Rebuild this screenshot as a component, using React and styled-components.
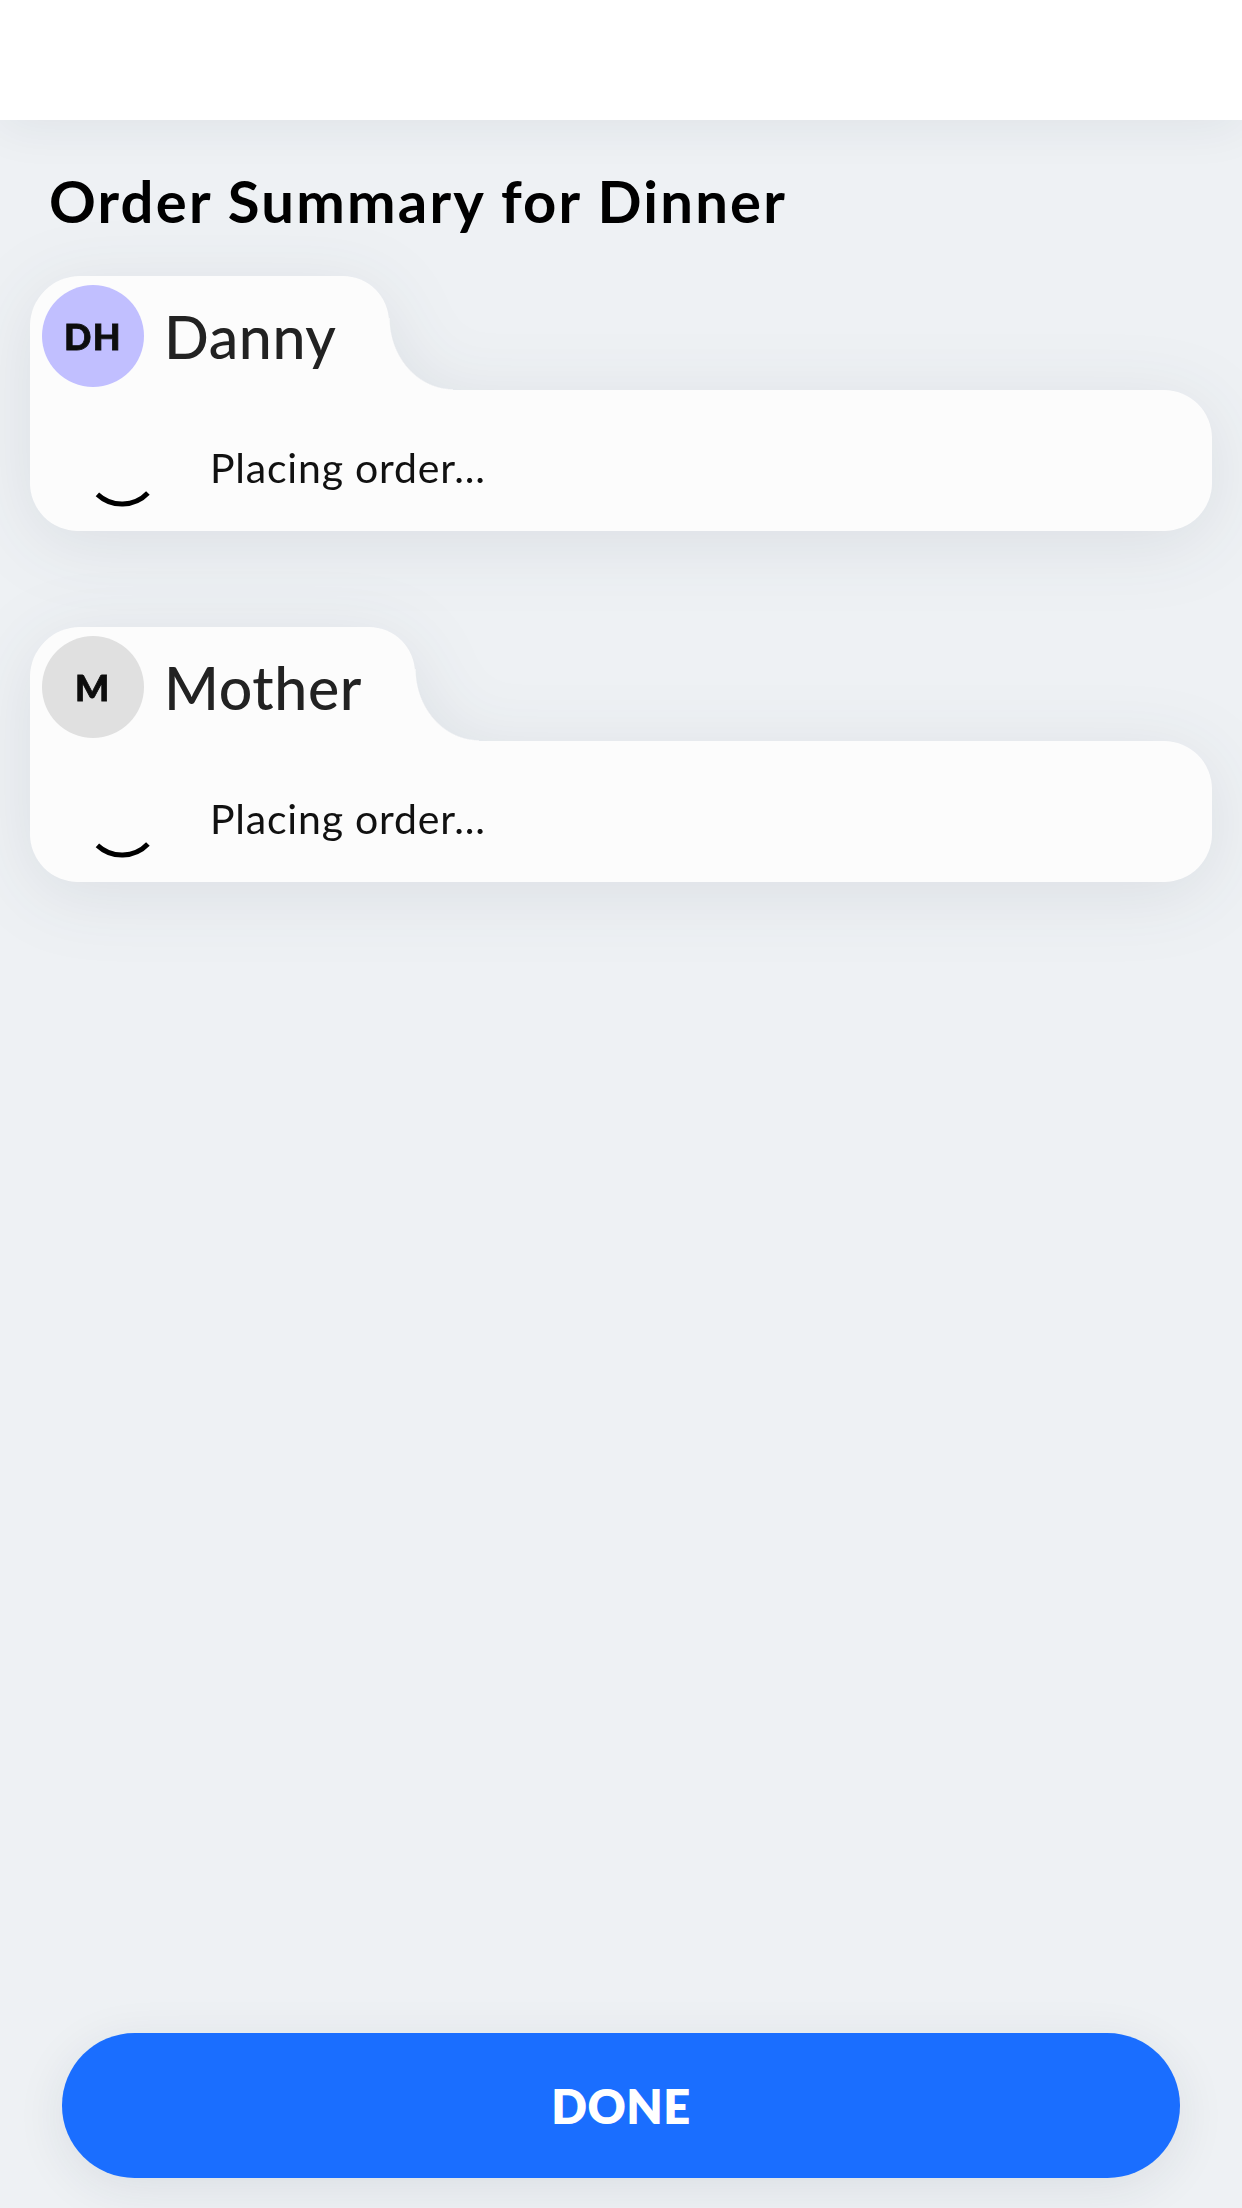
import React from "react";
import styled, { createGlobalStyle } from "styled-components";

const GlobalStyle = createGlobalStyle`
  html, body {
    margin: 0;
    padding: 0;
    background: #eef1f4;
  }
  * { box-sizing: border-box; }
  body {
    font-family: "Nunito", "Lato", "Noto Sans", sans-serif;
    -webkit-font-smoothing: antialiased;
  }
`;

const Page = styled.div`
  width: 1242px;
  min-height: 2208px;
  display: flex;
  flex-direction: column;
  background: #eef1f4;
  overflow: hidden;
`;

const Header = styled.header`
  height: 120px;
  flex-shrink: 0;
  background: #ffffff;
  box-shadow: 0 6px 50px rgba(30, 45, 70, 0.07);
  position: relative;
  z-index: 1;
`;

const Main = styled.main`
  flex: 1;
  padding: 52px 30px 0;
  display: flex;
  flex-direction: column;
`;

const Title = styled.h1`
  margin: 0 0 46px 19px;
  font-family: "Lato", sans-serif;
  font-weight: 700;
  font-size: 58px;
  letter-spacing: 2.2px;
  line-height: 1;
  color: #000;
`;

const CardList = styled.div`
  display: flex;
  flex-direction: column;
  gap: 96px;
`;

const Card = styled.section`
  display: flex;
  flex-direction: column;
  align-items: flex-start;
  filter: drop-shadow(0 12px 36px rgba(30, 45, 70, 0.09));
`;

const Tab = styled.div`
  position: relative;
  display: flex;
  align-items: center;
  gap: 20px;
  height: 114px;
  padding: 9px 53px 3px 12px;
  background: #fcfcfc;
  border-radius: 50px 46px 0 0;

  &::after {
    content: "";
    position: absolute;
    left: 100%;
    bottom: 0;
    width: 64px;
    height: 72px;
    background: radial-gradient(
      ellipse 64px 72px at 100% 0,
      transparent 98%,
      #fcfcfc 100%
    );
  }
`;

const Avatar = styled.div`
  width: 102px;
  height: 102px;
  border-radius: 50%;
  flex-shrink: 0;
  display: flex;
  align-items: center;
  justify-content: center;
  background: ${(p) => p.$bg};
  font-family: "Lato", sans-serif;
  font-weight: 900;
  font-size: 36px;
  color: #0d0d0d;
  letter-spacing: 1.5px;
  -webkit-text-stroke: 0.8px #0d0d0d;
`;

const Name = styled.span`
  font-family: "Lato", sans-serif;
  font-weight: 500;
  font-size: 59px;
  letter-spacing: 0.6px;
  line-height: 1;
  color: #222;
`;

const Body = styled.div`
  align-self: stretch;
  height: 141px;
  display: flex;
  align-items: center;
  gap: 48px;
  padding: 14px 0 0 52px;
  background: #fcfcfc;
  border-radius: 0 48px 48px 48px;
`;

const SpinnerSvg = styled.svg`
  width: 80px;
  height: 80px;
  flex-shrink: 0;
`;

const Status = styled.span`
  font-family: "Lato", sans-serif;
  font-weight: 400;
  font-size: 41px;
  letter-spacing: 0.8px;
  line-height: 1;
  color: #111;
`;

const Footer = styled.footer`
  padding: 0 62px 30px;
`;

const DoneButton = styled.button`
  width: 100%;
  height: 145px;
  border: none;
  border-radius: 73px;
  background: #1a6eff;
  color: #fff;
  font-family: "Lato", sans-serif;
  font-weight: 800;
  font-size: 47px;
  letter-spacing: 0.5px;
  box-shadow: 0 10px 50px rgba(30, 45, 70, 0.09);
  cursor: pointer;
`;

const Spinner = () => (
  <SpinnerSvg viewBox="0 0 80 80">
    <path
      d="M 65.9 65 A 36 36 0 0 1 15.4 66.3"
      fill="none"
      stroke="#000"
      strokeWidth="5"
      strokeLinecap="butt"
    />
  </SpinnerSvg>
);

const people = [
  { initials: "DH", name: "Danny", color: "#c1bfff" },
  { initials: "M", name: "Mother", color: "#e0e0e0" },
];

export default function App() {
  return (
    <>
      <GlobalStyle />
      <Page>
        <Header />
        <Main>
          <Title>Order Summary for Dinner</Title>
          <CardList>
            {people.map((p) => (
              <Card key={p.name}>
                <Tab>
                  <Avatar $bg={p.color}>{p.initials}</Avatar>
                  <Name>{p.name}</Name>
                </Tab>
                <Body>
                  <Spinner />
                  <Status>Placing order...</Status>
                </Body>
              </Card>
            ))}
          </CardList>
        </Main>
        <Footer>
          <DoneButton>DONE</DoneButton>
        </Footer>
      </Page>
    </>
  );
}
